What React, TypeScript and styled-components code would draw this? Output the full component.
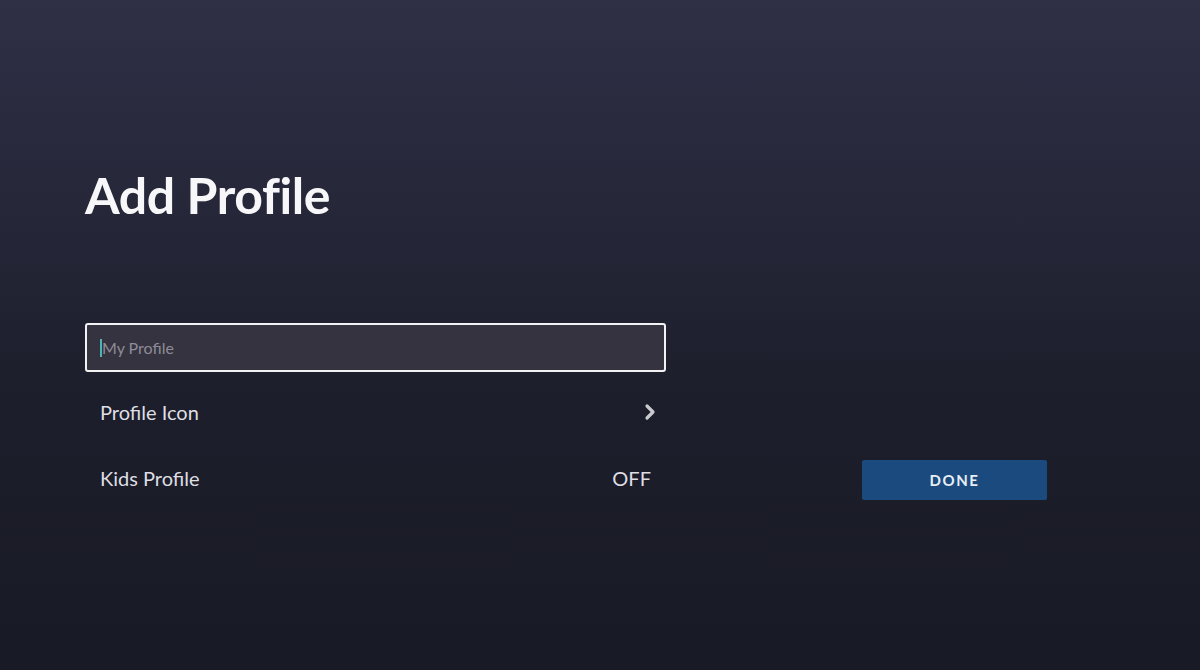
import React from "react";
import styled, { createGlobalStyle } from "styled-components";

const Global = createGlobalStyle`
  html, body { margin: 0; padding: 0; }
  body {
    width: 1200px;
    height: 670px;
    overflow: hidden;
    font-family: Lato, "Open Sans", sans-serif;
  }
`;

const Page = styled.div`
  width: 1200px;
  height: 670px;
  box-sizing: border-box;
  padding: 170px 0 0 85px;
  background: linear-gradient(180deg, #2f2f46 0%, #262739 30%, #1d1e2b 60%, #181a25 100%);
`;

const Title = styled.h1`
  margin: 0;
  font-size: 50px;
  line-height: 50px;
  font-weight: 700;
  color: #f7f7f9;
  letter-spacing: -0.4px;
`;

const Main = styled.div`
  margin-top: 103px;
  display: grid;
  grid-template-columns: 581px 185px;
  column-gap: 196px;
`;

const Form = styled.div`
  display: flex;
  flex-direction: column;
`;

const NameField = styled.div`
  height: 49px;
  box-sizing: border-box;
  border: 2px solid #f2f2f4;
  border-radius: 3px;
  background: #35333f;
  display: flex;
  align-items: center;
  padding-left: 13px;
  margin-bottom: 7px;
`;

const Caret = styled.span`
  width: 2px;
  height: 18px;
  background: #4fb3b0;
`;

const Placeholder = styled.span`
  font-size: 16px;
  color: #8d8c98;
`;

const Row = styled.div`
  height: 66px;
  display: flex;
  align-items: center;
  justify-content: space-between;
  padding: 0 15px;
`;

const RowLabel = styled.span`
  font-size: 20px;
  color: #dedee4;
`;

const RowValue = styled.span`
  font-size: 20px;
  color: #dedee4;
`;

const ChevronBox = styled.span`
  display: flex;
  margin-right: -6px;
`;

const Side = styled.div`
  align-self: end;
  margin-bottom: 11px;
`;

const DoneButton = styled.button`
  width: 185px;
  height: 40px;
  border: none;
  border-radius: 2px;
  background: #1b4a7e;
  color: #e8eef6;
  font-family: Lato, "Open Sans", sans-serif;
  font-weight: 700;
  font-size: 15px;
  letter-spacing: 1.6px;
  cursor: pointer;
`;

const Chevron = () => (
  <ChevronBox>
    <svg width="14" height="18" viewBox="0 0 14 18">
      <polyline
        points="4,3 10,9 4,15"
        fill="none"
        stroke="#c9c9d0"
        strokeWidth="3.2"
        strokeLinecap="round"
        strokeLinejoin="round"
      />
    </svg>
  </ChevronBox>
);

export default function App() {
  return (
    <>
      <Global />
      <Page>
        <Title>Add Profile</Title>
        <Main>
          <Form>
            <NameField>
              <Caret />
              <Placeholder>My Profile</Placeholder>
            </NameField>
            <Row>
              <RowLabel>Profile Icon</RowLabel>
              <Chevron />
            </Row>
            <Row>
              <RowLabel>Kids Profile</RowLabel>
              <RowValue>OFF</RowValue>
            </Row>
          </Form>
          <Side>
            <DoneButton>DONE</DoneButton>
          </Side>
        </Main>
      </Page>
    </>
  );
}
